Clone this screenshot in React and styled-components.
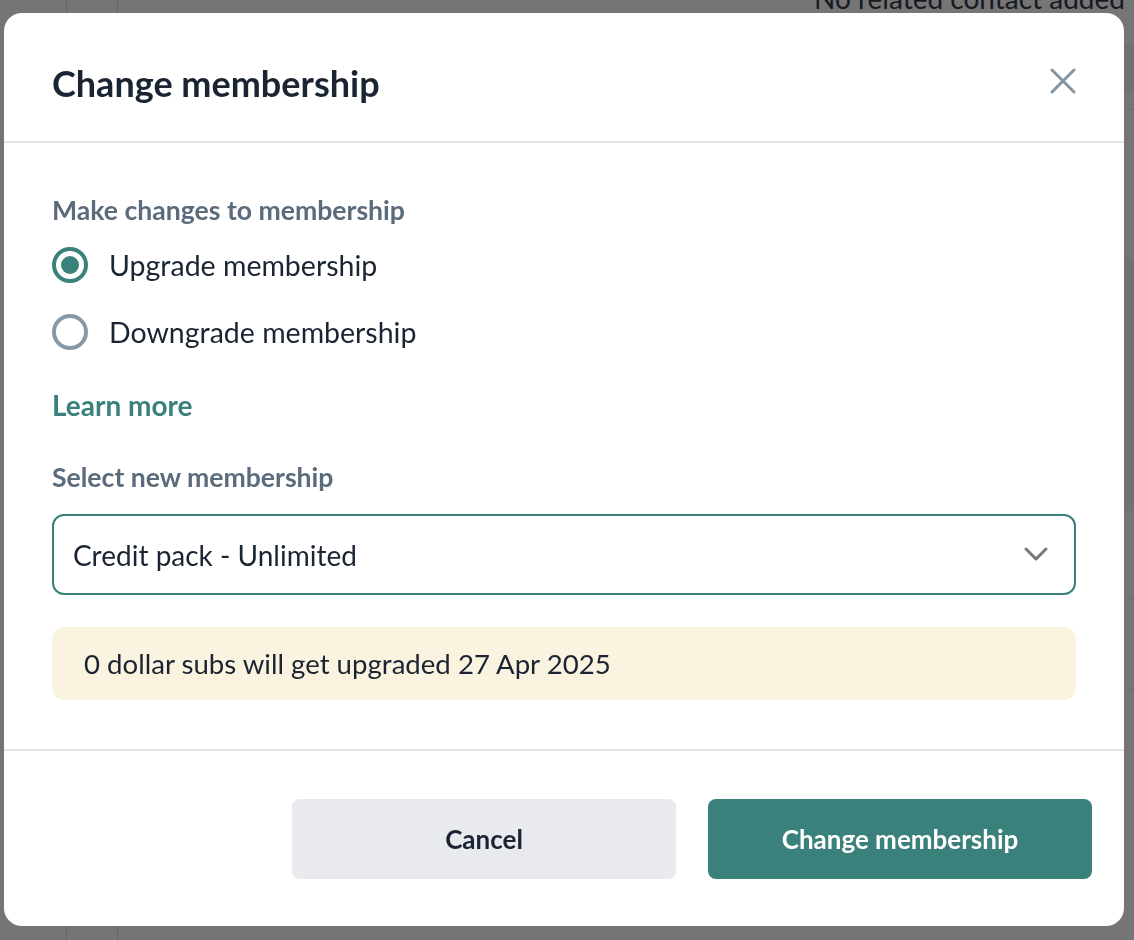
import React, { useState } from "react"
import styled, { createGlobalStyle } from "styled-components"

const GlobalStyle = createGlobalStyle`
  html, body {
    margin: 0;
    padding: 0;
    width: 1134px;
    height: 940px;
    overflow: hidden;
    font-family: Lato, "Open Sans", sans-serif;
  }
  * { box-sizing: border-box; }
`

const teal = "#3a807b"
const ink = "#1a2433"
const slate = "#5b6b7c"

// page behind the dialog
const Backdrop = styled.div`
  width: 1134px;
  height: 940px;
  background: #fff;
  display: grid;
  grid-template-columns: 67px 51px 1fr;
`

const Rail = styled.div`
  border-right: 1px solid #d8dce1;
`

const Content = styled.div`
  display: flex;
  flex-direction: column;
  margin-top: -19px;
`

const EmptyNote = styled.div`
  align-self: flex-end;
  font-size: 28px;
  color: #333c48;
  padding-right: 9px;
  line-height: 34px;
`

const BgRow = styled.div`
  height: ${(p) => p.h}px;
  border-bottom: 1px solid #eceef1;
  background: ${(p) => (p.shade ? "#f6f7f8" : "#fff")};
`

const Overlay = styled.div`
  position: fixed;
  inset: 0;
  background: rgba(0, 0, 0, 0.54);
  padding: 13px 10px 14px 4px;
  display: flex;
`

const Dialog = styled.div`
  flex: 1;
  background: #fff;
  border-radius: 18px;
  display: flex;
  flex-direction: column;
  overflow: hidden;
`

const Header = styled.header`
  height: 130px;
  padding: 0 48px;
  display: flex;
  align-items: center;
  justify-content: space-between;
  border-bottom: 2px solid #e3e5e9;
`

const Title = styled.h2`
  margin: 0;
  font-size: 36px;
  font-weight: 700;
  color: ${ink};
  padding-top: 12px;
`

const CloseButton = styled.button`
  border: 0;
  background: none;
  padding: 0;
  width: 30px;
  height: 30px;
  display: flex;
  align-items: center;
  justify-content: center;
  margin: 8px -2px 0 0;
  cursor: pointer;
`

const Body = styled.div`
  flex: 1;
  padding: 52px 48px 0;
  display: flex;
  flex-direction: column;
`

const FieldLabel = styled.div`
  font-size: 26.6px;
  font-weight: 700;
  color: ${slate};
  line-height: 30px;
`

const RadioGroup = styled.div`
  display: flex;
  flex-direction: column;
  gap: 31px;
  margin-top: 22px;
`

const RadioRow = styled.label`
  display: flex;
  align-items: center;
  gap: 21px;
  font-size: 28.5px;
  color: ${ink};
  line-height: 36px;
  cursor: pointer;
`

const RadioCircle = styled.span`
  width: 36px;
  height: 36px;
  border-radius: 50%;
  border: 4px solid ${(p) => (p.checked ? teal : "#8799a8")};
  display: flex;
  align-items: center;
  justify-content: center;
  flex-shrink: 0;
  &::after {
    content: "";
    width: 18px;
    height: 18px;
    border-radius: 50%;
    background: ${teal};
    display: ${(p) => (p.checked ? "block" : "none")};
  }
`

const LearnMore = styled.a`
  margin-top: 37px;
  font-size: 28px;
  font-weight: 700;
  color: ${teal};
  line-height: 36px;
  text-decoration: none;
  align-self: flex-start;
`

const SelectLabel = styled(FieldLabel)`
  margin-top: 39px;
`

const SelectBox = styled.div`
  margin-top: 22px;
  height: 81px;
  border: 2px solid ${teal};
  border-radius: 12px;
  padding: 0 26px 0 19px;
  display: flex;
  align-items: center;
  justify-content: space-between;
  font-size: 28px;
  color: ${ink};
`

const Notice = styled.div`
  margin-top: 32px;
  height: 73px;
  background: #faf3df;
  border-radius: 12px;
  padding: 0 32px;
  display: flex;
  align-items: center;
  font-size: 27.6px;
  color: ${ink};
`

const Footer = styled.footer`
  border-top: 2px solid #e3e5e9;
  height: 177px;
  padding: 48px 32px 0;
  display: flex;
  justify-content: flex-end;
  align-items: flex-start;
  gap: 32px;
`

const Button = styled.button`
  width: 384px;
  height: 80px;
  border: 0;
  border-radius: 8px;
  font-family: inherit;
  font-size: 26px;
  font-weight: 700;
  cursor: pointer;
  background: ${(p) => (p.primary ? teal : "#e9eaee")};
  color: ${(p) => (p.primary ? "#fff" : ink)};
`

const options = [
  { id: "upgrade", label: "Upgrade membership" },
  { id: "downgrade", label: "Downgrade membership" },
]

export default function App() {
  const [choice, setChoice] = useState("upgrade")

  return (
    <>
      <GlobalStyle />
      <Backdrop>
        <Rail />
        <Rail />
        <Content>
          <EmptyNote>No related contact added</EmptyNote>
          <BgRow h={30} />
          <BgRow h={45} shade />
          <BgRow h={20} />
          <BgRow h={150} />
          <BgRow h={250} shade />
          <BgRow h={90} />
          <BgRow h={90} />
        </Content>
      </Backdrop>
      <Overlay>
        <Dialog>
          <Header>
            <Title>Change membership</Title>
            <CloseButton aria-label="Close">
              <svg width="26" height="26" viewBox="0 0 26 26">
                <path
                  d="M2 2 L24 24 M24 2 L2 24"
                  stroke="#8494a3"
                  strokeWidth="3"
                  strokeLinecap="round"
                  fill="none"
                />
              </svg>
            </CloseButton>
          </Header>
          <Body>
            <FieldLabel>Make changes to membership</FieldLabel>
            <RadioGroup>
              {options.map((o) => (
                <RadioRow key={o.id} onClick={() => setChoice(o.id)}>
                  <RadioCircle checked={choice === o.id} />
                  {o.label}
                </RadioRow>
              ))}
            </RadioGroup>
            <LearnMore href="#">Learn more</LearnMore>
            <SelectLabel>Select new membership</SelectLabel>
            <SelectBox>
              Credit pack - Unlimited
              <svg width="24" height="15" viewBox="0 0 24 15">
                <path
                  d="M2 2 L12 12 L22 2"
                  stroke="#777"
                  strokeWidth="3"
                  fill="none"
                  strokeLinecap="round"
                  strokeLinejoin="round"
                />
              </svg>
            </SelectBox>
            <Notice>0 dollar subs will get upgraded 27 Apr 2025</Notice>
          </Body>
          <Footer>
            <Button>Cancel</Button>
            <Button primary>Change membership</Button>
          </Footer>
        </Dialog>
      </Overlay>
    </>
  )
}
